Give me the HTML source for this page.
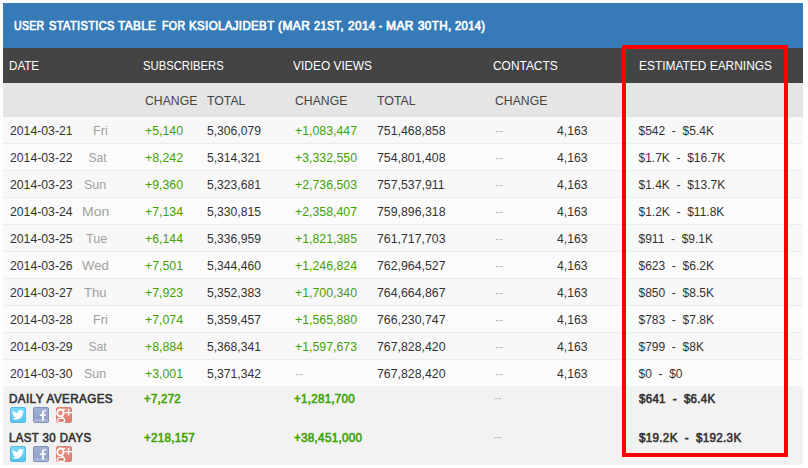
<!DOCTYPE html><html><head><meta charset="utf-8"><title>User Statistics</title><style>
*{margin:0;padding:0;box-sizing:border-box}
html,body{width:808px;height:468px;background:#fff;overflow:hidden}
body{font-family:"Liberation Sans",sans-serif;font-size:12px;color:#333;position:relative}
#t{position:absolute;left:3px;top:3px;width:800px;height:462px;background:#f2f2f2}
.a{position:absolute;white-space:pre;line-height:16px;transform-origin:0 0}
.bar{position:absolute;left:0;width:800px}
#title{top:0;height:45px;background:#377ab8;color:#fff}
#hd{top:45px;height:35px;background:#444;color:#fff}
#sh{top:80px;height:34px;background:#e5e5e5;color:#444}
.r{position:absolute;left:0;width:800px;height:27px;background:#fafafa;border-bottom:1px solid #ececec}
.g{color:#41a200}
.d{color:#a0a0a0}
.m{color:#bcbcbc}
#red{position:absolute;left:619px;top:42px;width:166px;height:412px;border:4px solid #fe0000}
.ic{position:absolute;display:block}
</style></head><body>
<div id="t">
<div class="bar" id="title"></div><div class="bar" id="hd"></div><div class="bar" id="sh"></div>
<div class="r" style="top:114px;background:#f8f8f8;"></div>
<div class="r" style="top:141px;background:#fbfbfb;"></div>
<div class="r" style="top:168px;background:#f8f8f8;"></div>
<div class="r" style="top:195px;background:#fbfbfb;"></div>
<div class="r" style="top:222px;background:#f8f8f8;"></div>
<div class="r" style="top:249px;background:#fbfbfb;"></div>
<div class="r" style="top:276px;background:#f8f8f8;"></div>
<div class="r" style="top:303px;background:#fbfbfb;"></div>
<div class="r" style="top:330px;background:#f8f8f8;"></div>
<div class="r" style="top:357px;background:#fbfbfb;height:26px;border:0;"></div>
<span class="a" style="left:11.45px;top:15.40px;transform:scaleX(0.8401);font-size:12.5px;-webkit-text-stroke:0.7px;letter-spacing:0.4px;color:#fff;">USER</span>
<span class="a" style="left:45.95px;top:15.40px;transform:scaleX(0.8854);font-size:12.5px;-webkit-text-stroke:0.7px;letter-spacing:0.4px;color:#fff;">STATISTICS</span>
<span class="a" style="left:115.35px;top:15.40px;transform:scaleX(0.9432);font-size:12.5px;-webkit-text-stroke:0.7px;letter-spacing:0.4px;color:#fff;">TABLE</span>
<span class="a" style="left:158.85px;top:15.40px;transform:scaleX(0.8500);font-size:12.5px;-webkit-text-stroke:0.7px;letter-spacing:0.4px;color:#fff;">FOR</span>
<span class="a" style="left:185.95px;top:15.40px;transform:scaleX(0.9196);font-size:12.5px;-webkit-text-stroke:0.7px;letter-spacing:0.4px;color:#fff;">KSIOLAJIDEBT</span>
<span class="a" style="left:274.85px;top:15.40px;transform:scaleX(0.9596);font-size:12.5px;-webkit-text-stroke:0.7px;letter-spacing:0.4px;color:#fff;">(MAR</span>
<span class="a" style="left:311.05px;top:15.40px;transform:scaleX(0.8766);font-size:12.5px;-webkit-text-stroke:0.7px;letter-spacing:0.4px;color:#fff;">21ST,</span>
<span class="a" style="left:345.25px;top:15.40px;transform:scaleX(0.9444);font-size:12.5px;-webkit-text-stroke:0.7px;letter-spacing:0.4px;color:#fff;">2014</span>
<span class="a" style="left:375.95px;top:15.40px;transform:scaleX(0.7164);font-size:12.5px;-webkit-text-stroke:0.7px;letter-spacing:0.4px;color:#fff;">-</span>
<span class="a" style="left:383.35px;top:15.40px;transform:scaleX(0.9632);font-size:12.5px;-webkit-text-stroke:0.7px;letter-spacing:0.4px;color:#fff;">MAR</span>
<span class="a" style="left:414.55px;top:15.40px;transform:scaleX(0.9338);font-size:12.5px;-webkit-text-stroke:0.7px;letter-spacing:0.4px;color:#fff;">30TH,</span>
<span class="a" style="left:452.25px;top:15.40px;transform:scaleX(0.8958);font-size:12.5px;-webkit-text-stroke:0.7px;letter-spacing:0.4px;color:#fff;">2014)</span>
<span class="a" style="left:5.90px;top:55.00px;transform:scaleX(0.8935);font-size:13px;color:#fff;">DATE</span>
<span class="a" style="left:140.25px;top:55.00px;transform:scaleX(0.8665);font-size:13px;color:#fff;">SUBSCRIBERS</span>
<span class="a" style="left:290.00px;top:55.00px;transform:scaleX(0.9193);font-size:13px;color:#fff;">VIDEO VIEWS</span>
<span class="a" style="left:490.25px;top:55.00px;transform:scaleX(0.9176);font-size:13px;color:#fff;">CONTACTS</span>
<span class="a" style="left:635.50px;top:55.00px;transform:scaleX(0.9176);font-size:13px;color:#fff;">ESTIMATED EARNINGS</span>
<span class="a" style="left:141.80px;top:90.00px;transform:scaleX(0.9402);font-size:13px;color:#444;">CHANGE</span>
<span class="a" style="left:203.60px;top:90.00px;transform:scaleX(0.9438);font-size:13px;color:#444;">TOTAL</span>
<span class="a" style="left:291.80px;top:90.00px;transform:scaleX(0.9402);font-size:13px;color:#444;">CHANGE</span>
<span class="a" style="left:373.60px;top:90.00px;transform:scaleX(0.9487);font-size:13px;color:#444;">TOTAL</span>
<span class="a" style="left:491.80px;top:90.00px;transform:scaleX(0.9402);font-size:13px;color:#444;">CHANGE</span>
<span class="a" style="left:7.00px;top:119.75px;transform:scaleX(1.0200);">2014-03-21</span>
<span class="a d" style="left:89.50px;top:119.75px;transform:scaleX(1.0500);">Fri</span>
<span class="a g" style="left:142.00px;top:119.75px;transform:scaleX(1.0270);">+5,140</span>
<span class="a" style="left:204.00px;top:119.75px;transform:scaleX(1.0112);">5,306,079</span>
<span class="a g" style="left:292.00px;top:119.75px;transform:scaleX(1.0265);">+1,083,447</span>
<span class="a" style="left:374.00px;top:119.75px;transform:scaleX(1.0270);">751,468,858</span>
<span class="a m" style="left:492.00px;top:119.75px;transform:scaleX(1.0000);">--</span>
<span class="a" style="left:554.00px;top:119.75px;transform:scaleX(1.0167);">4,163</span>
<span class="a" style="left:635.50px;top:119.75px;transform:scaleX(1.0000);">$542&nbsp; -&nbsp; $5.4K</span>
<span class="a" style="left:7.00px;top:146.75px;transform:scaleX(1.0200);">2014-03-22</span>
<span class="a d" style="left:85.50px;top:146.75px;transform:scaleX(1.0000);">Sat</span>
<span class="a g" style="left:142.00px;top:146.75px;transform:scaleX(1.0270);">+8,242</span>
<span class="a" style="left:204.00px;top:146.75px;transform:scaleX(1.0112);">5,314,321</span>
<span class="a g" style="left:292.00px;top:146.75px;transform:scaleX(1.0265);">+3,332,550</span>
<span class="a" style="left:374.00px;top:146.75px;transform:scaleX(1.0270);">754,801,408</span>
<span class="a m" style="left:492.00px;top:146.75px;transform:scaleX(1.0000);">--</span>
<span class="a" style="left:554.00px;top:146.75px;transform:scaleX(1.0167);">4,163</span>
<span class="a" style="left:635.50px;top:146.75px;transform:scaleX(1.0000);">$1.7K&nbsp; -&nbsp; $16.7K</span>
<span class="a" style="left:7.00px;top:173.75px;transform:scaleX(1.0200);">2014-03-23</span>
<span class="a d" style="left:81.40px;top:173.75px;transform:scaleX(1.0339);">Sun</span>
<span class="a g" style="left:142.00px;top:173.75px;transform:scaleX(1.0270);">+9,360</span>
<span class="a" style="left:204.00px;top:173.75px;transform:scaleX(1.0112);">5,323,681</span>
<span class="a g" style="left:292.00px;top:173.75px;transform:scaleX(1.0265);">+2,736,503</span>
<span class="a" style="left:374.00px;top:173.75px;transform:scaleX(1.0270);">757,537,911</span>
<span class="a m" style="left:492.00px;top:173.75px;transform:scaleX(1.0000);">--</span>
<span class="a" style="left:554.00px;top:173.75px;transform:scaleX(1.0167);">4,163</span>
<span class="a" style="left:635.50px;top:173.75px;transform:scaleX(1.0000);">$1.4K&nbsp; -&nbsp; $13.7K</span>
<span class="a" style="left:7.00px;top:200.75px;transform:scaleX(1.0200);">2014-03-24</span>
<span class="a d" style="left:79.00px;top:200.75px;transform:scaleX(1.1679);">Mon</span>
<span class="a g" style="left:142.00px;top:200.75px;transform:scaleX(1.0270);">+7,134</span>
<span class="a" style="left:204.00px;top:200.75px;transform:scaleX(1.0112);">5,330,815</span>
<span class="a g" style="left:292.00px;top:200.75px;transform:scaleX(1.0265);">+2,358,407</span>
<span class="a" style="left:374.00px;top:200.75px;transform:scaleX(1.0270);">759,896,318</span>
<span class="a m" style="left:492.00px;top:200.75px;transform:scaleX(1.0000);">--</span>
<span class="a" style="left:554.00px;top:200.75px;transform:scaleX(1.0167);">4,163</span>
<span class="a" style="left:635.50px;top:200.75px;transform:scaleX(1.0000);">$1.2K&nbsp; -&nbsp; $11.8K</span>
<span class="a" style="left:7.00px;top:227.75px;transform:scaleX(1.0200);">2014-03-25</span>
<span class="a d" style="left:82.80px;top:227.75px;transform:scaleX(1.0469);">Tue</span>
<span class="a g" style="left:142.00px;top:227.75px;transform:scaleX(1.0270);">+6,144</span>
<span class="a" style="left:204.00px;top:227.75px;transform:scaleX(1.0112);">5,336,959</span>
<span class="a g" style="left:292.00px;top:227.75px;transform:scaleX(1.0265);">+1,821,385</span>
<span class="a" style="left:374.00px;top:227.75px;transform:scaleX(1.0270);">761,717,703</span>
<span class="a m" style="left:492.00px;top:227.75px;transform:scaleX(1.0000);">--</span>
<span class="a" style="left:554.00px;top:227.75px;transform:scaleX(1.0167);">4,163</span>
<span class="a" style="left:635.50px;top:227.75px;transform:scaleX(1.0000);">$911&nbsp; -&nbsp; $9.1K</span>
<span class="a" style="left:7.00px;top:254.75px;transform:scaleX(1.0200);">2014-03-26</span>
<span class="a d" style="left:79.00px;top:254.75px;transform:scaleX(1.0967);">Wed</span>
<span class="a g" style="left:142.00px;top:254.75px;transform:scaleX(1.0270);">+7,501</span>
<span class="a" style="left:204.00px;top:254.75px;transform:scaleX(1.0112);">5,344,460</span>
<span class="a g" style="left:292.00px;top:254.75px;transform:scaleX(1.0265);">+1,246,824</span>
<span class="a" style="left:374.00px;top:254.75px;transform:scaleX(1.0270);">762,964,527</span>
<span class="a m" style="left:492.00px;top:254.75px;transform:scaleX(1.0000);">--</span>
<span class="a" style="left:554.00px;top:254.75px;transform:scaleX(1.0167);">4,163</span>
<span class="a" style="left:635.50px;top:254.75px;transform:scaleX(1.0000);">$623&nbsp; -&nbsp; $6.2K</span>
<span class="a" style="left:7.00px;top:281.75px;transform:scaleX(1.0200);">2014-03-27</span>
<span class="a d" style="left:81.40px;top:281.75px;transform:scaleX(1.0924);">Thu</span>
<span class="a g" style="left:142.00px;top:281.75px;transform:scaleX(1.0270);">+7,923</span>
<span class="a" style="left:204.00px;top:281.75px;transform:scaleX(1.0112);">5,352,383</span>
<span class="a g" style="left:292.00px;top:281.75px;transform:scaleX(1.0265);">+1,700,340</span>
<span class="a" style="left:374.00px;top:281.75px;transform:scaleX(1.0270);">764,664,867</span>
<span class="a m" style="left:492.00px;top:281.75px;transform:scaleX(1.0000);">--</span>
<span class="a" style="left:554.00px;top:281.75px;transform:scaleX(1.0167);">4,163</span>
<span class="a" style="left:635.50px;top:281.75px;transform:scaleX(1.0000);">$850&nbsp; -&nbsp; $8.5K</span>
<span class="a" style="left:7.00px;top:308.75px;transform:scaleX(1.0200);">2014-03-28</span>
<span class="a d" style="left:89.50px;top:308.75px;transform:scaleX(1.0500);">Fri</span>
<span class="a g" style="left:142.00px;top:308.75px;transform:scaleX(1.0270);">+7,074</span>
<span class="a" style="left:204.00px;top:308.75px;transform:scaleX(1.0112);">5,359,457</span>
<span class="a g" style="left:292.00px;top:308.75px;transform:scaleX(1.0265);">+1,565,880</span>
<span class="a" style="left:374.00px;top:308.75px;transform:scaleX(1.0270);">766,230,747</span>
<span class="a m" style="left:492.00px;top:308.75px;transform:scaleX(1.0000);">--</span>
<span class="a" style="left:554.00px;top:308.75px;transform:scaleX(1.0167);">4,163</span>
<span class="a" style="left:635.50px;top:308.75px;transform:scaleX(1.0000);">$783&nbsp; -&nbsp; $7.8K</span>
<span class="a" style="left:7.00px;top:335.75px;transform:scaleX(1.0200);">2014-03-29</span>
<span class="a d" style="left:85.50px;top:335.75px;transform:scaleX(1.0000);">Sat</span>
<span class="a g" style="left:142.00px;top:335.75px;transform:scaleX(1.0270);">+8,884</span>
<span class="a" style="left:204.00px;top:335.75px;transform:scaleX(1.0112);">5,368,341</span>
<span class="a g" style="left:292.00px;top:335.75px;transform:scaleX(1.0265);">+1,597,673</span>
<span class="a" style="left:374.00px;top:335.75px;transform:scaleX(1.0270);">767,828,420</span>
<span class="a m" style="left:492.00px;top:335.75px;transform:scaleX(1.0000);">--</span>
<span class="a" style="left:554.00px;top:335.75px;transform:scaleX(1.0167);">4,163</span>
<span class="a" style="left:635.50px;top:335.75px;transform:scaleX(1.0000);">$799&nbsp; -&nbsp; $8K</span>
<span class="a" style="left:7.00px;top:362.75px;transform:scaleX(1.0200);">2014-03-30</span>
<span class="a d" style="left:81.40px;top:362.75px;transform:scaleX(1.0339);">Sun</span>
<span class="a g" style="left:142.00px;top:362.75px;transform:scaleX(1.0270);">+3,001</span>
<span class="a" style="left:204.00px;top:362.75px;transform:scaleX(1.0112);">5,371,342</span>
<span class="a m" style="left:292.00px;top:362.75px;transform:scaleX(1.0000);">--</span>
<span class="a" style="left:374.00px;top:362.75px;transform:scaleX(1.0270);">767,828,420</span>
<span class="a m" style="left:492.00px;top:362.75px;transform:scaleX(1.0000);">--</span>
<span class="a" style="left:554.00px;top:362.75px;transform:scaleX(1.0167);">4,163</span>
<span class="a" style="left:635.50px;top:362.75px;transform:scaleX(1.0000);">$0&nbsp; -&nbsp; $0</span>
<svg width="0" height="0" style="position:absolute"><defs><linearGradient id="gt" x1="0" y1="0" x2="0" y2="1"><stop offset="0" stop-color="#74dcfa"/><stop offset="1" stop-color="#58c2ec"/></linearGradient><linearGradient id="gf" x1="0" y1="0" x2="0" y2="1"><stop offset="0" stop-color="#a2b0d4"/><stop offset="1" stop-color="#8c9dc7"/></linearGradient><linearGradient id="gg" x1="0" y1="0" x2="0" y2="1"><stop offset="0" stop-color="#e59488"/><stop offset="1" stop-color="#dd7c6f"/></linearGradient></defs></svg>
<span class="a" style="left:6.05px;top:387.60px;transform:scaleX(0.9726);-webkit-text-stroke:0.6px;letter-spacing:0.4px;">DAILY AVERAGES</span>
<span class="a g" style="left:140.55px;top:387.60px;transform:scaleX(0.9504);-webkit-text-stroke:0.6px;letter-spacing:0.3px;">+7,272</span>
<span class="a g" style="left:290.55px;top:387.60px;transform:scaleX(0.9616);-webkit-text-stroke:0.6px;letter-spacing:0.3px;">+1,281,700</span>
<span class="a m" style="left:491.00px;top:387.10px;transform:scaleX(0.9375);">--</span>
<span class="a" style="left:635.80px;top:387.60px;transform:scaleX(0.9606);-webkit-text-stroke:0.6px;letter-spacing:0.3px;">$641&nbsp; -&nbsp; $6.4K</span>
<svg class="ic" style="left:7px;top:404px" width="16" height="16" viewBox="0 0 16 16"><rect x=".5" y=".5" width="15" height="15" rx="1.5" fill="url(#gt)" stroke="#5ab6e2"/><path transform="translate(2,1.9) scale(.5)" d="M23.953 4.57a10 10 0 01-2.825.775 4.958 4.958 0 002.163-2.723c-.951.555-2.005.959-3.127 1.184a4.92 4.92 0 00-8.384 4.482C7.69 8.095 4.067 6.13 1.64 3.162a4.822 4.822 0 00-.666 2.475c0 1.71.87 3.213 2.188 4.096a4.904 4.904 0 01-2.228-.616v.06a4.923 4.923 0 003.946 4.827 4.996 4.996 0 01-2.212.085 4.936 4.936 0 004.604 3.417 9.867 9.867 0 01-6.102 2.105c-.39 0-.779-.023-1.17-.067a13.995 13.995 0 007.557 2.209c9.053 0 13.998-7.496 13.998-13.985 0-.21 0-.42-.015-.63A9.935 9.935 0 0024 4.59z" fill="#fff"/></svg><svg class="ic" style="left:30px;top:404px" width="16" height="16" viewBox="0 0 16 16"><rect x=".5" y=".5" width="15" height="15" rx="1.5" fill="url(#gf)" stroke="#7f90ba"/><rect x="1" y="12" width="14" height="3" fill="#a6b4d5"/><path d="M8.9 13.8V8.9H6.8V7.2H8.9V5.6C8.9 3.8 10 2.9 11.6 2.9H13V4.6H12C11.3 4.6 11 4.9 11 5.6V7.2H13L12.8 8.9H11V13.8Z" fill="#f4f6fb"/></svg><svg class="ic" style="left:53px;top:404px" width="16" height="16" viewBox="0 0 16 16"><rect x=".5" y=".5" width="15" height="15" rx="1.5" fill="url(#gg)" stroke="#d98175"/><g fill="none" stroke="#fff" stroke-width="1.8"><ellipse cx="4.400" cy="5.900" rx="3.200" ry="3.400"/><path d="M5.500 2.600H9.300" stroke-width="1.200"/><path d="M5.800 9.200C6.300 10.800 8.700 11.600 8.700 13.500 8.700 14.600 8.300 15.200 7.600 15.600" stroke-width="1.500"/><path d="M6.600 11.500C3.800 10.900 1.200 11.700 1.200 13.300 1.200 14.700 2.900 15.500 4.900 15.500 6.200 15.500 7.300 15.200 7.900 14.700" stroke-width="1.200"/></g><rect x="8.900" y="5" width="7.100" height="1.300" fill="#fff"/><rect x="11.900" y="2" width="1.300" height="6.700" fill="#fff"/></svg>
<span class="a" style="left:6.05px;top:426.60px;transform:scaleX(0.9550);-webkit-text-stroke:0.6px;letter-spacing:0.4px;">LAST 30 DAYS</span>
<span class="a g" style="left:140.55px;top:426.60px;transform:scaleX(0.9652);-webkit-text-stroke:0.6px;letter-spacing:0.3px;">+218,157</span>
<span class="a g" style="left:290.55px;top:426.60px;transform:scaleX(0.9691);-webkit-text-stroke:0.6px;letter-spacing:0.3px;">+38,451,000</span>
<span class="a m" style="left:491.00px;top:426.10px;transform:scaleX(0.9375);">--</span>
<span class="a" style="left:635.80px;top:426.60px;transform:scaleX(0.9714);-webkit-text-stroke:0.6px;letter-spacing:0.3px;">$19.2K&nbsp; -&nbsp; $192.3K</span>
<svg class="ic" style="left:7px;top:443px" width="16" height="16" viewBox="0 0 16 16"><rect x=".5" y=".5" width="15" height="15" rx="1.5" fill="url(#gt)" stroke="#5ab6e2"/><path transform="translate(2,1.9) scale(.5)" d="M23.953 4.57a10 10 0 01-2.825.775 4.958 4.958 0 002.163-2.723c-.951.555-2.005.959-3.127 1.184a4.92 4.92 0 00-8.384 4.482C7.69 8.095 4.067 6.13 1.64 3.162a4.822 4.822 0 00-.666 2.475c0 1.71.87 3.213 2.188 4.096a4.904 4.904 0 01-2.228-.616v.06a4.923 4.923 0 003.946 4.827 4.996 4.996 0 01-2.212.085 4.936 4.936 0 004.604 3.417 9.867 9.867 0 01-6.102 2.105c-.39 0-.779-.023-1.17-.067a13.995 13.995 0 007.557 2.209c9.053 0 13.998-7.496 13.998-13.985 0-.21 0-.42-.015-.63A9.935 9.935 0 0024 4.59z" fill="#fff"/></svg><svg class="ic" style="left:30px;top:443px" width="16" height="16" viewBox="0 0 16 16"><rect x=".5" y=".5" width="15" height="15" rx="1.5" fill="url(#gf)" stroke="#7f90ba"/><rect x="1" y="12" width="14" height="3" fill="#a6b4d5"/><path d="M8.9 13.8V8.9H6.8V7.2H8.9V5.6C8.9 3.8 10 2.9 11.6 2.9H13V4.6H12C11.3 4.6 11 4.9 11 5.6V7.2H13L12.8 8.9H11V13.8Z" fill="#f4f6fb"/></svg><svg class="ic" style="left:53px;top:443px" width="16" height="16" viewBox="0 0 16 16"><rect x=".5" y=".5" width="15" height="15" rx="1.5" fill="url(#gg)" stroke="#d98175"/><g fill="none" stroke="#fff" stroke-width="1.8"><ellipse cx="4.400" cy="5.900" rx="3.200" ry="3.400"/><path d="M5.500 2.600H9.300" stroke-width="1.200"/><path d="M5.800 9.200C6.300 10.800 8.700 11.600 8.700 13.500 8.700 14.600 8.300 15.200 7.600 15.600" stroke-width="1.500"/><path d="M6.600 11.500C3.800 10.900 1.200 11.700 1.200 13.300 1.200 14.700 2.900 15.500 4.900 15.500 6.200 15.500 7.300 15.200 7.900 14.700" stroke-width="1.200"/></g><rect x="8.900" y="5" width="7.100" height="1.300" fill="#fff"/><rect x="11.900" y="2" width="1.300" height="6.700" fill="#fff"/></svg>
<div id="red"></div>
</div></body></html>
